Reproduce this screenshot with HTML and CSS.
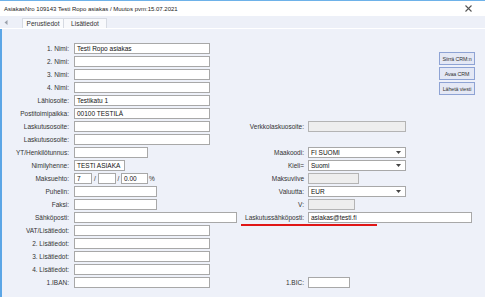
FILE: index.html
```html
<!DOCTYPE html>
<html lang="fi">
<head>
<meta charset="utf-8">
<title>Asiakas</title>
<link rel="stylesheet" href="styles.css">
</head>
<body>
<div class="window">
  <div class="titlebar">
    <span class="title">AsiakasNro 109143 Testi Ropo asiakas / Muutos pvm:15.07.2021</span>
    <svg class="close" width="7" height="7" viewBox="0 0 7 7"><path d="M0.5 0.5 L6.5 6.5 M6.5 0.5 L0.5 6.5" stroke="#555" stroke-width="1.1" fill="none"/></svg>
  </div>
  <div class="tabbar">
    <svg class="tab-arrow" width="4" height="5" viewBox="0 0 4 5"><path d="M3.5 0 L3.5 5 L0.5 2.5 Z" fill="#9aa0aa"/></svg>
    <div class="tab active">Perustiedot</div>
    <div class="tab">Lisätiedot</div>
  </div>
  <div class="content">
    <div class="form">
      <label class="l">1. Nimi:</label><div class="f"><div class="inp w136">Testi Ropo asiakas</div></div>
      <div class="buttons">
        <div class="btn">Siirrä CRM:n</div>
        <div class="btn">Avaa CRM</div>
        <div class="btn">Lähetä viesti</div>
      </div>
      <label class="l">2. Nimi:</label><div class="f"><div class="inp w136"></div></div>
      <label class="l">3. Nimi:</label><div class="f"><div class="inp w136"></div></div>
      <label class="l">4. Nimi:</label><div class="f"><div class="inp w136"></div></div>
      <label class="l">Lähiosoite:</label><div class="f"><div class="inp w136">Testikatu 1</div></div>
      <label class="l">Postitoimipaikka:</label><div class="f"><div class="inp w136">00100 TESTILÄ</div></div>
      <label class="l">Laskutusosoite:</label><div class="f"><div class="inp w136"></div></div>
      <label class="rl">Verkkolaskuosoite:</label><div class="rf"><div class="inp dis w98"></div></div>
      <label class="l">Laskutusosoite:</label><div class="f"><div class="inp w136"></div></div>
      <label class="l">YT/Henkilötunnus:</label><div class="f"><div class="inp w74"></div></div>
      <label class="rl">Maakoodi:</label><div class="rf"><div class="sel w98"><span>FI SUOMI</span><svg class="caret" width="5" height="3" viewBox="0 0 5 3"><path d="M0 0 L5 0 L2.5 3 Z" fill="#444"/></svg></div></div>
      <label class="l">Nimilyhenne:</label><div class="f"><div class="inp w51">TESTI ASIAKA</div></div>
      <label class="rl">Kieli=</label><div class="rf"><div class="sel w98"><span>Suomi</span><svg class="caret" width="5" height="3" viewBox="0 0 5 3"><path d="M0 0 L5 0 L2.5 3 Z" fill="#444"/></svg></div></div>
      <label class="l">Maksuehto:</label>
      <div class="f terms">
        <div class="inp w18">7</div><span class="sep">/</span>
        <div class="inp w18"></div><span class="sep">/</span>
        <div class="inp w27">0.00</div><span class="pct">%</span>
      </div>
      <label class="rl">Maksuviive</label><div class="rf"><div class="inp dis w51"></div></div>
      <label class="l">Puhelin:</label><div class="f"><div class="inp w83"></div></div>
      <label class="rl">Valuutta:</label><div class="rf"><div class="sel w98"><span>EUR</span><svg class="caret" width="5" height="3" viewBox="0 0 5 3"><path d="M0 0 L5 0 L2.5 3 Z" fill="#444"/></svg></div></div>
      <label class="l">Faksi:</label><div class="f"><div class="inp w83"></div></div>
      <label class="rl">V:</label><div class="rf"><div class="inp dis w47"></div></div>
      <label class="l">Sähköposti:</label><div class="f"><div class="inp w163"></div></div>
      <label class="rl marked">Laskutussähköposti:</label><div class="rf"><div class="inp w164">asiakas@testi.fi</div></div>
      <label class="l">VAT/Lisätiedot:</label><div class="f"><div class="inp w136"></div></div>
      <label class="l">2. Lisätiedot:</label><div class="f"><div class="inp w136"></div></div>
      <label class="l">3. Lisätiedot:</label><div class="f"><div class="inp w136"></div></div>
      <label class="l">4. Lisätiedot:</label><div class="f"><div class="inp w136"></div></div>
      <label class="l">1.IBAN:</label><div class="f"><div class="inp w136"></div></div>
      <label class="rl">1.BIC:</label><div class="rf"><div class="inp w42"></div></div>
    </div>
  </div>
</div>
</body>
</html>
```

FILE: styles.css
```css
* { box-sizing: border-box; }
html, body {
  margin: 0;
  padding: 0;
  width: 485px;
  height: 297px;
  overflow: hidden;
  background: #eef1f9;
}
.window {
  width: 485px;
  height: 297px;
  display: flex;
  flex-direction: column;
  font-family: "Liberation Sans", Arial, sans-serif;
  font-size: 6.5px;
  color: #2a2a2a;
}
.titlebar {
  height: 16px;
  flex: none;
  background: #ffffff;
  border-top: 1px solid #6eb2e9;
  display: flex;
  align-items: center;
  justify-content: space-between;
  padding: 0 13px 0 4px;
}
.title { color: #222; font-size: 6px; }
.close { display: block; }
.tabbar {
  height: 13px;
  flex: none;
  background: #edf0f8;
  border-bottom: 1px solid #ffffff;
  display: flex;
  align-items: flex-end;
  padding-left: 4px;
}
.tab-arrow { align-self: center; margin-right: 14px; }
.tab {
  height: 10px;
  padding: 0 5px;
  display: flex;
  align-items: center;
  justify-content: center;
  background: #f8f9fc;
  border: 1px solid #d6dae2;
  border-bottom: none;
  color: #333;
}
.tab.active { width: 42px; background: #fafbfd; }
.tab + .tab { width: 43px; border-left: none; }
.content {
  flex: 1;
  background: #eef1f9;
  border-left: 2px solid #5ba6e6;
  padding-top: 14px;
}
.form {
  display: grid;
  grid-template-columns: 72px 167px 67px 172px;
  grid-auto-rows: 13px;
}
.l, .rl {
  text-align: right;
  line-height: 11px;
  padding-right: 4px;
  white-space: nowrap;
  color: #333;
}
.l { grid-column: 1; padding-right: 5px; }
.f { grid-column: 2; }
.rl { grid-column: 3; }
.rf { grid-column: 4; }
.marked { position: relative; }
.marked::after {
  content: "";
  position: absolute;
  left: 0;
  top: 12px;
  width: 136px;
  height: 2px;
  background: #e01616;
}
.inp, .sel {
  height: 11px;
  border: 1px solid #a8a8a8;
  background: #ffffff;
  padding-left: 2px;
  line-height: 9px;
  color: #111;
  white-space: nowrap;
  overflow: hidden;
}
.dis { background: #eeeeee; border-color: #b4b4b4; }
.sel {
  display: flex;
  align-items: center;
  justify-content: space-between;
  padding-right: 4px;
}
.caret { display: block; }
.w18 { width: 18px; }
.w27 { width: 27px; }
.w42 { width: 42px; }
.w47 { width: 47px; }
.w51 { width: 51px; }
.w74 { width: 74px; }
.w83 { width: 83px; }
.w98 { width: 98px; }
.w136 { width: 136px; }
.w163 { width: 163px; }
.w164 { width: 164px; }
.terms { display: flex; align-items: flex-start; }
.sep { line-height: 11px; width: 5px; text-align: center; color: #333; }
.terms .sep:first-of-type { width: 6px; }
.pct { line-height: 11px; margin-left: 1px; color: #333; }
.buttons {
  grid-column: 4;
  grid-row: span 6;
  display: flex;
  flex-direction: column;
  align-items: flex-end;
  gap: 2px;
  padding-top: 9px;
  padding-right: 5px;
}
.btn {
  width: 36px;
  height: 13px;
  padding: 0;
  border: 1px solid #8ea3d4;
  background: #e4e8f5;
  font-size: 5.3px;
  letter-spacing: -0.1px;
  color: #333;
  display: flex;
  align-items: center;
  justify-content: center;
  white-space: nowrap;
  overflow: visible;
}
```
